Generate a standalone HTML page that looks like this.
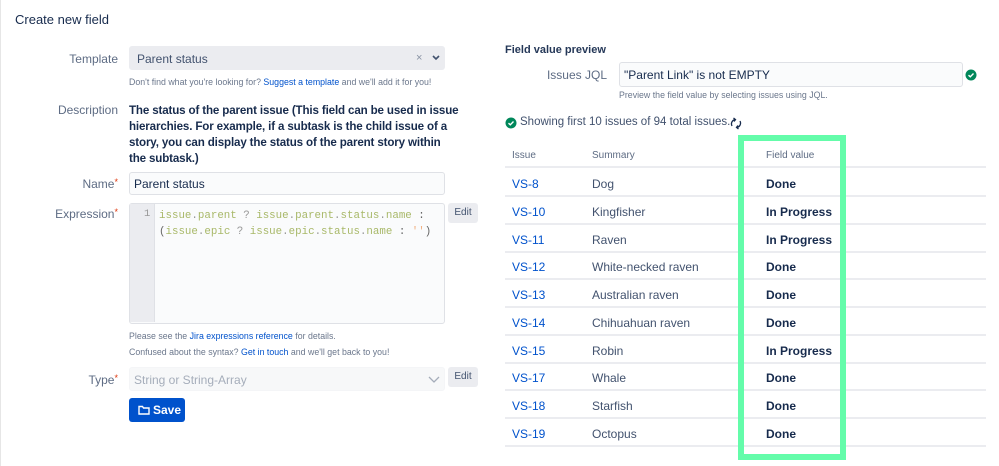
<!DOCTYPE html>
<html><head><meta charset="utf-8"><style>
*{box-sizing:border-box;margin:0;padding:0}
body{width:999px;height:466px;background:#fff;font-family:"Liberation Sans",sans-serif;color:#172b4d;position:relative;overflow:hidden}
.a{position:absolute;white-space:nowrap}
.lbl{font-size:12px;color:#5e6c84;text-align:right;width:110px;left:8px}
.req{color:#de350b;font-size:9px;vertical-align:top}
.help{font-size:8.8px;color:#6b778c}
a,.lnk{color:#0052cc;text-decoration:none}
.box{position:absolute;border:1.5px solid #dfe1e6;border-radius:3px;background:#fafbfc}
.btn{position:absolute;background:#ebecf0;border-radius:3px;font-size:10px;color:#42526e;text-align:center;line-height:19px}
.row{position:absolute;left:505px;width:481px;height:28px;border-bottom:2px solid #ebecf0;font-size:12px}
.row span{position:absolute;top:8px}
.c1{left:7px;color:#0052cc}.c2{left:87px;color:#42526e}.c3{left:261px;font-weight:bold;color:#172b4d}
.mono{font-family:"Liberation Mono",monospace;font-size:11px;color:#a8b868}
</style></head><body>
<div style="position:absolute;left:0;top:0;width:1px;height:466px;background:#e6e6e6"></div>
<div class="a" style="left:15px;top:12px;font-size:13px;">Create new field</div>

<div class="a lbl" style="top:52px">Template</div>
<div class="box" style="left:129px;top:46px;width:316px;height:24px;background:#ebecf0;border-color:#ebecf0"></div>
<div class="a" style="left:137px;top:52px;font-size:12px;color:#42526e">Parent status</div>
<div class="a" style="left:416px;top:52px;font-size:11px;color:#8993a4">×</div>
<svg class="a" style="left:432px;top:55px" width="8" height="6"><path d="M1 1L4 4L7 1" stroke="#42526e" stroke-width="1.6" fill="none"/></svg>
<div class="a help" style="left:129px;top:77px">Don't find what you're looking for? <a>Suggest a template</a> and we'll add it for you!</div>

<div class="a lbl" style="top:103px">Description</div>
<div class="a" style="left:129px;top:103px;font-size:11.6px;letter-spacing:-0.15px;font-weight:bold;line-height:16px;white-space:normal;width:330px">The status of the parent issue (This field can be used in issue<br>hierarchies. For example, if a subtask is the child issue of a<br>story, you can display the status of the parent story within<br>the subtask.)</div>

<div class="a lbl" style="top:177px">Name<span class="req">*</span></div>
<div class="box" style="left:129px;top:172px;width:316px;height:23px;background:#fafbfc"></div>
<div class="a" style="left:134px;top:177px;font-size:12px">Parent status</div>

<div class="a lbl" style="top:207px">Expression<span class="req">*</span></div>
<div class="box" style="left:129px;top:203px;width:316px;height:121px"></div>
<div class="a" style="left:130px;top:204px;width:25px;height:118px;background:#ebecf0;border-right:1px solid #dfe1e6"></div>
<div class="a mono" style="left:144px;top:208px;color:#999;font-size:10.5px">1</div>
<div class="a mono" style="left:159px;top:208px;line-height:16px;font-size:10.8px">issue<span style="color:#999">.</span>parent <span style="color:#999">?</span> issue<span style="color:#999">.</span>parent<span style="color:#999">.</span>status<span style="color:#999">.</span>name <span style="color:#666">:</span><br><span style="color:#666">(</span>issue<span style="color:#999">.</span>epic <span style="color:#999">?</span> issue<span style="color:#999">.</span>epic<span style="color:#999">.</span>status<span style="color:#999">.</span>name <span style="color:#666">:</span> <span style="color:#f0b080">''</span><span style="color:#666">)</span></div>
<div class="btn" style="left:448px;top:203px;width:30px;height:20px">Edit</div>
<div class="a help" style="left:129px;top:331px">Please see the <a>Jira expressions reference</a> for details.</div>
<div class="a help" style="left:129px;top:347px">Confused about the syntax? <a>Get in touch</a> and we'll get back to you!</div>

<div class="a lbl" style="top:373px">Type<span class="req">*</span></div>
<div class="box" style="left:129px;top:367px;width:316px;height:24px;background:#f7f8f9;border-color:#f4f5f7"></div>
<div class="a" style="left:134px;top:373px;font-size:12px;color:#a5adba">String or String-Array</div>
<svg class="a" style="left:428px;top:376px" width="12" height="7"><path d="M1 1L6 6L11 1" stroke="#a5adba" stroke-width="1.3" fill="none"/></svg>
<div class="btn" style="left:448px;top:367px;width:30px;height:20px">Edit</div>
<div class="a" style="left:129px;top:398px;width:56px;height:24px;background:#0052cc;border-radius:3px"></div>
<svg class="a" style="left:138px;top:405px" width="12" height="10"><path d="M1 1.5H4.5L5.5 3H11V9H1Z" stroke="#fff" stroke-width="1.4" fill="none"/></svg>
<div class="a" style="left:153px;top:403px;font-size:12px;font-weight:bold;color:#fff">Save</div>

<div class="a" style="left:505px;top:44px;font-size:11px;font-weight:bold;color:#253858">Field value preview</div>
<div class="a" style="left:496px;top:68px;font-size:12px;color:#5e6c84;width:111px;text-align:right">Issues JQL</div>
<div class="box" style="left:619px;top:62px;width:344px;height:25px"></div>
<div class="a" style="left:624px;top:68px;font-size:12px">"Parent Link" is not EMPTY</div>
<svg class="a" style="left:965px;top:69px" width="12" height="12"><circle cx="6" cy="6" r="5.5" fill="#00875a"/><path d="M3.5 6.2L5.3 7.8L8.5 4.5" stroke="#fff" stroke-width="1.4" fill="none"/></svg>
<div class="a help" style="left:619px;top:90px">Preview the field value by selecting issues using JQL.</div>
<svg class="a" style="left:505px;top:117px" width="12" height="12"><circle cx="6" cy="6" r="5.5" fill="#00875a"/><path d="M3.5 6.2L5.3 7.8L8.5 4.5" stroke="#fff" stroke-width="1.4" fill="none"/></svg>
<div class="a" style="left:520px;top:116px;font-size:11.5px;color:#42526e">Showing first 10 issues of 94 total issues.</div>
<svg class="a" style="left:729px;top:117px" width="14" height="13"><path d="M3 9A4.5 4.5 0 0 1 6 2.5M4.5 1L6.5 2.6L5 4.5M11 4A4.5 4.5 0 0 1 8 10.5M9.5 12L7.5 10.4L9 8.5" stroke="#172b4d" stroke-width="1.3" fill="none"/></svg>

<div class="row" style="top:140px;font-size:10px"><span class="c1" style="color:#5e6c84;top:10px">Issue</span><span class="c2" style="color:#5e6c84;top:10px">Summary</span><span class="c3" style="color:#5e6c84;font-weight:normal;top:10px">Field value</span></div>
<div class="row" style="top:169px"><span class="c1">VS-8</span><span class="c2">Dog</span><span class="c3">Done</span></div>
<div class="row" style="top:197px"><span class="c1">VS-10</span><span class="c2">Kingfisher</span><span class="c3">In Progress</span></div>
<div class="row" style="top:225px"><span class="c1">VS-11</span><span class="c2">Raven</span><span class="c3">In Progress</span></div>
<div class="row" style="top:252px"><span class="c1">VS-12</span><span class="c2">White-necked raven</span><span class="c3">Done</span></div>
<div class="row" style="top:280px"><span class="c1">VS-13</span><span class="c2">Australian raven</span><span class="c3">Done</span></div>
<div class="row" style="top:308px"><span class="c1">VS-14</span><span class="c2">Chihuahuan raven</span><span class="c3">Done</span></div>
<div class="row" style="top:336px"><span class="c1">VS-15</span><span class="c2">Robin</span><span class="c3">In Progress</span></div>
<div class="row" style="top:363px"><span class="c1">VS-17</span><span class="c2">Whale</span><span class="c3">Done</span></div>
<div class="row" style="top:391px"><span class="c1">VS-18</span><span class="c2">Starfish</span><span class="c3">Done</span></div>
<div class="row" style="top:419px"><span class="c1">VS-19</span><span class="c2">Octopus</span><span class="c3">Done</span></div>

<div class="a" style="left:738px;top:135px;width:108px;height:325px;border:6px solid #64fcaa"></div>
</body></html>
